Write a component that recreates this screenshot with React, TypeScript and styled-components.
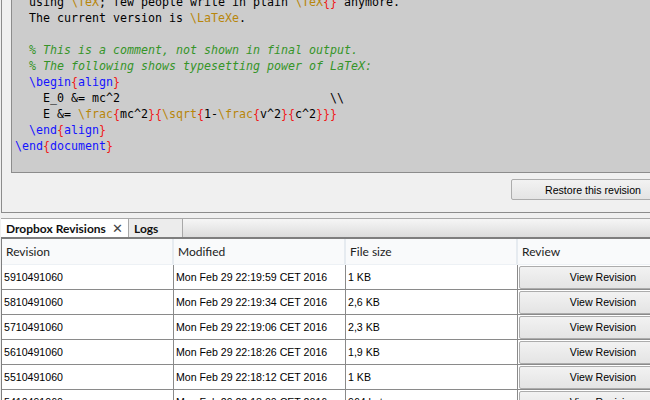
import React from "react";
import styled, { createGlobalStyle } from "styled-components";

const Global = createGlobalStyle`
  html, body { margin: 0; padding: 0; background: #f0f0f0; overflow: hidden; }
  body { width: 650px; height: 400px; font-family: "Liberation Sans", Arial, sans-serif; }
`;

const App0 = styled.div`
  width: 650px;
  height: 400px;
  overflow: hidden;
  padding-left: 1px;
  box-sizing: border-box;
  display: flex;
  flex-direction: column;
`;

const TopPanel = styled.div`
  flex: none;
  height: 213px;
  box-sizing: border-box;
  border-left: 1px solid #8c8c8c;
  border-bottom: 1px solid #8c8c8c;
  padding-left: 9px;
  display: flex;
  flex-direction: column;
  width: 760px;
`;

const Editor = styled.div`
  flex: none;
  height: 173px;
  box-sizing: border-box;
  background: #cccccc;
  border-left: 1px solid #8c8c8c;
  border-bottom: 1px solid #8c8c8c;
  overflow: hidden;
`;

const Code = styled.pre`
  margin: -6px 0 0 0;
  padding-left: 3px;
  font-family: "DejaVu Sans Mono", "Liberation Mono", monospace;
  font-size: 11.63px;
  line-height: 16px;
  color: #000;
`;

const Cmd = styled.span`color: #b8860b;`;
const Kw = styled.span`color: #1414ff;`;
const Br = styled.span`color: #f01818;`;
const Cm = styled.span`color: #359428; font-style: italic;`;

const ButtonRow = styled.div`
  display: flex;
  padding: 6px 0 0 500px;
`;

const Button = styled.button<{ $w: number; $h: number }>`
  width: ${(p) => p.$w}px;
  height: ${(p) => p.$h}px;
  flex: none;
  box-sizing: border-box;
  border: 1px solid #acacac;
  border-radius: 2px;
  background: linear-gradient(#f2f2f2, #e4e4e4);
  font-family: "Liberation Sans", Arial, sans-serif;
  font-size: 10.6px;
  color: #000;
  padding: 0;
  margin: 0;
`;

const TabStrip = styled.div`
  flex: none;
  margin-top: 5px;
  height: 21px;
  box-sizing: border-box;
  border-top: 1px solid #a8a8a8;
  border-bottom: 2px solid #7e7e7e;
  display: flex;
  background: linear-gradient(#f6f6f6, #dcdcdc);
`;

const Tab = styled.div<{ $active?: boolean; $w: number }>`
  width: ${(p) => p.$w}px;
  box-sizing: border-box;
  background: ${(p) => (p.$active ? "#ffffff" : "#ececec")};
  border-right: 1px solid #a8a8a8;
  display: flex;
  align-items: center;
  padding-left: 5px;
  gap: 6px;
  font-family: Lato, "Liberation Sans", sans-serif;
  font-weight: 700;
  font-size: 12px;
  color: #111;
`;

const Close = styled.span`
  font-weight: 400;
  font-size: 13px;
  color: #444;
`;

const Table = styled.div`
  flex: none;
  background: #ffffff;
  border-left: 1px solid #7e7e7e;
  width: 760px;
`;

const Header = styled.div`
  display: grid;
  grid-template-columns: 172px 172px 172px 172px;
  height: 25px;
  background: #f9fafb;
  border-bottom: 1px solid #edf1f5;
`;

const HeadCell = styled.div`
  border-right: 2px solid #e6ebf0;
  display: flex;
  align-items: center;
  padding-left: 4px;
  font-family: Lato, "Liberation Sans", sans-serif;
  font-size: 12px;
  color: #222;
`;

const Row = styled.div`
  display: grid;
  grid-template-columns: 172px 172px 172px 172px;
  height: 25px;
  box-sizing: border-box;
  border-bottom: 1px solid #8a8a8a;
`;

const Cell = styled.div`
  border-right: 1px solid #8a8a8a;
  display: flex;
  align-items: center;
  padding-left: 2px;
  font-size: 10.6px;
  color: #000;
`;

const BtnCell = styled.div`
  display: flex;
  align-items: center;
  padding-left: 1px;
`;

const rows = [
  ["5910491060", "Mon Feb 29 22:19:59 CET 2016", "1 KB"],
  ["5810491060", "Mon Feb 29 22:19:34 CET 2016", "2,6 KB"],
  ["5710491060", "Mon Feb 29 22:19:06 CET 2016", "2,3 KB"],
  ["5610491060", "Mon Feb 29 22:18:26 CET 2016", "1,9 KB"],
  ["5510491060", "Mon Feb 29 22:18:12 CET 2016", "1 KB"],
  ["5410491060", "Mon Feb 29 22:18:00 CET 2016", "964 bytes"],
];

export default function App() {
  return (
    <>
      <Global />
      <App0>
        <TopPanel>
          <Editor>
            <Code>
{"  using "}<Cmd>\TeX</Cmd>{"; few people write in plain "}<Cmd>\TeX</Cmd><Br>{"{}"}</Br>{" anymore.\n"}
{"  The current version is "}<Cmd>\LaTeXe</Cmd>{".\n"}
{"\n"}
<Cm>{"  % This is a comment, not shown in final output.\n"}</Cm>
<Cm>{"  % The following shows typesetting power of LaTeX:\n"}</Cm>
{"  "}<Kw>\begin</Kw><Br>{"{"}</Br><Kw>align</Kw><Br>{"}"}</Br>{"\n"}
{"    E_0 &= mc^2                              \\\\\n"}
{"    E &= "}<Cmd>\frac</Cmd><Br>{"{"}</Br>{"mc^2"}<Br>{"}{"}</Br><Cmd>\sqrt</Cmd><Br>{"{"}</Br>{"1-"}<Cmd>\frac</Cmd><Br>{"{"}</Br>{"v^2"}<Br>{"}{"}</Br>{"c^2"}<Br>{"}}}"}</Br>{"\n"}
{"  "}<Kw>\end</Kw><Br>{"{"}</Br><Kw>align</Kw><Br>{"}"}</Br>{"\n"}
<Kw>\end</Kw><Br>{"{"}</Br><Kw>document</Kw><Br>{"}"}</Br>{"\n"}
            </Code>
          </Editor>
          <ButtonRow>
            <Button $w={164} $h={21}>Restore this revision</Button>
          </ButtonRow>
        </TopPanel>
        <TabStrip>
          <Tab $active $w={128}>Dropbox Revisions <Close>✕</Close></Tab>
          <Tab $w={54}>Logs</Tab>
        </TabStrip>
        <Table>
          <Header>
            <HeadCell>Revision</HeadCell>
            <HeadCell>Modified</HeadCell>
            <HeadCell>File size</HeadCell>
            <HeadCell>Review</HeadCell>
          </Header>
          {rows.map((r) => (
            <Row key={r[0]}>
              <Cell>{r[0]}</Cell>
              <Cell>{r[1]}</Cell>
              <Cell>{r[2]}</Cell>
              <BtnCell>
                <Button $w={168} $h={23}>View Revision</Button>
              </BtnCell>
            </Row>
          ))}
        </Table>
      </App0>
    </>
  );
}
